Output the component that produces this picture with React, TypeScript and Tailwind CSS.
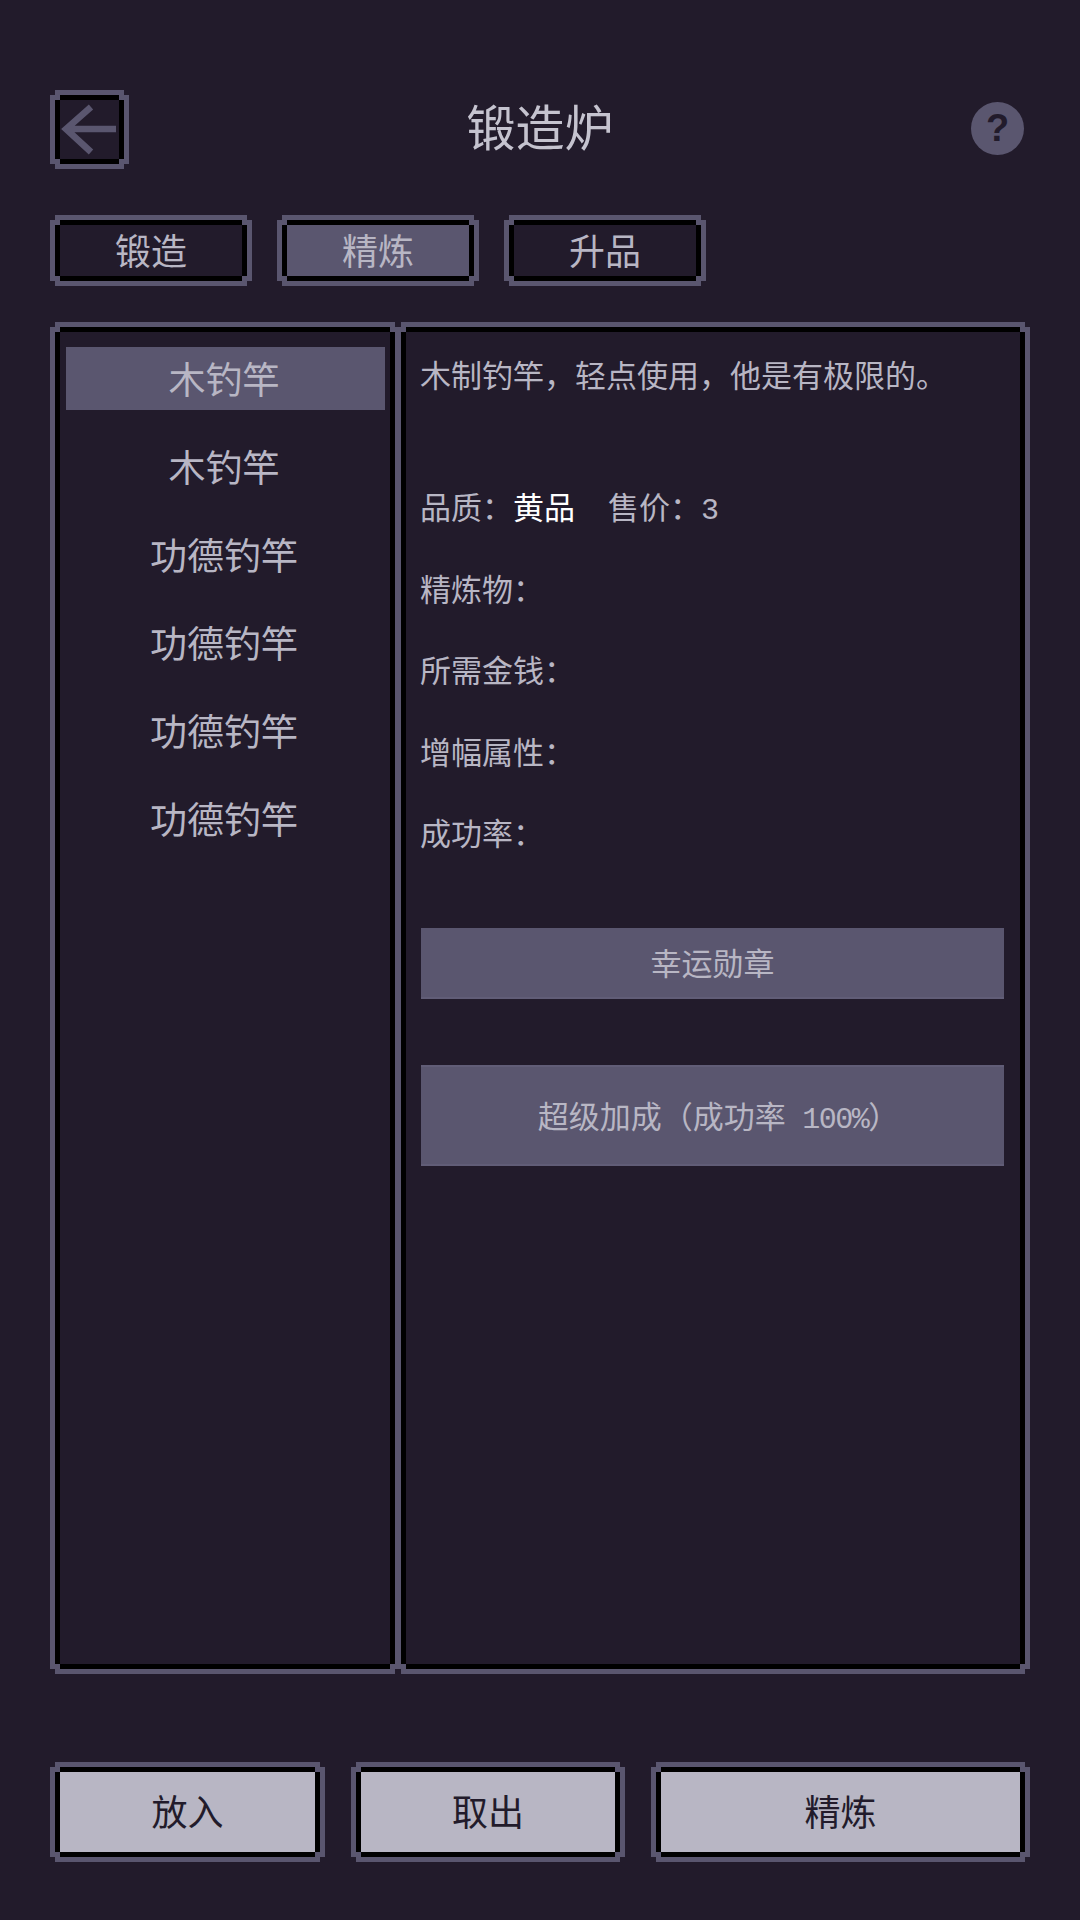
import { ReactNode } from "react";

const corners = [
  ["-top-[5px] -left-[5px] bg-[#221b2b]", "top-0 left-0 bg-[#5a566f]"],
  ["-top-[5px] -right-[5px] bg-[#221b2b]", "top-0 right-0 bg-[#5a566f]"],
  ["-bottom-[5px] -left-[5px] bg-[#221b2b]", "bottom-0 left-0 bg-[#5a566f]"],
  ["-bottom-[5px] -right-[5px] bg-[#221b2b]", "bottom-0 right-0 bg-[#5a566f]"],
];

const PixelFrame = ({
  className,
  fill,
  children,
}: {
  className: string;
  fill: string;
  children?: ReactNode;
}) => (
  <div className={`relative border-[5px] border-[#5a566f] ${className}`}>
    <div className={`h-full border-[5px] border-black ${fill}`}>{children}</div>
    {corners.flat().map((c) => (
      <span key={c} className={`absolute size-[5px] ${c}`} />
    ))}
  </div>
);

const Tab = ({ label, active }: { label: string; active?: boolean }) => (
  <PixelFrame
    className="w-[202px] h-[71px]"
    fill={active ? "bg-[#5a566f]" : "bg-[#221b2b]"}
  >
    <div className="flex h-full items-center justify-center pt-[10px] text-[36px] text-[#b8b6c4]">
      {label}
    </div>
  </PixelFrame>
);

const ActionButton = ({ label, className }: { label: string; className: string }) => (
  <PixelFrame className={`h-[100px] ${className}`} fill="bg-[#b8b6c4]">
    <div className="flex h-full items-center justify-center pt-[10px] text-[36px] text-[#221b2b]">
      {label}
    </div>
  </PixelFrame>
);

const items = ["木钓竿", "木钓竿", "功德钓竿", "功德钓竿", "功德钓竿", "功德钓竿"];
const fields = ["精炼物：", "所需金钱：", "增幅属性：", "成功率："];

const App = () => {
  return (
    <div className="h-[1920px] w-[1080px] overflow-hidden bg-[#221b2b] px-[50px] pt-[90px] font-['Liberation_Mono','Noto_Sans_CJK_SC',monospace] text-[#b8b6c4]">
      <div className="flex h-[79px] items-center justify-between">
        <PixelFrame className="size-[79px]" fill="bg-[#221b2b]">
          <svg viewBox="0 0 59 59" className="size-full">
            <path
              d="M56 29H6M31 7 6 29l25 23"
              fill="none"
              stroke="#5a566f"
              strokeWidth="6.5"
            />
          </svg>
        </PixelFrame>
        <h1 className="pt-[8px] text-[49px] font-normal text-[#c5c3cf]">锻造炉</h1>
        <div className="flex w-[79px] justify-end pb-[2px] pr-[6px]">
          <div className="flex size-[53px] items-center justify-center rounded-full bg-[#5a566f] font-['Liberation_Sans',sans-serif] text-[38px] font-bold text-[#221b2b]">
            ?
          </div>
        </div>
      </div>

      <div className="mt-[46px] flex gap-[25px]">
        <Tab label="锻造" />
        <Tab label="精炼" active />
        <Tab label="升品" />
      </div>

      <div className="mt-[36px] flex h-[1352px]">
        <PixelFrame className="w-[350px]" fill="bg-[#221b2b] pl-[6px] pr-[5px] pt-[15px]">
          <div className="flex flex-col gap-[25px]">
            {items.map((name, i) => (
              <div
                key={i}
                className={`flex h-[63px] items-center justify-center pr-[3px] pt-[12px] text-[37px] ${
                  i === 0 ? "bg-[#5a566f]" : ""
                }`}
              >
                {name}
              </div>
            ))}
          </div>
        </PixelFrame>
        <PixelFrame className="-ml-[4px] flex-1" fill="bg-[#221b2b] pl-[14px] pr-[16px] pt-[25px]">
          <p className="h-[44px] text-[31px] leading-[44px] whitespace-nowrap">
            木制钓竿，轻点使用，他是有极限的。
          </p>
          <div className="mt-[88px] flex flex-col gap-[37.5px] text-[31px] leading-[44px]">
            <div className="flex h-[44px]">
              <span>品质：</span>
              <span className="text-white">黄品</span>
              <span className="ml-[33px]">
                售价：<span className="text-[30px] tracking-[-1.5px]">3</span>
              </span>
            </div>
            {fields.map((f) => (
              <div key={f} className="h-[44px]">
                {f}
              </div>
            ))}
          </div>
          <div className="ml-[1px] mt-[69px] flex h-[71px] w-[583px] items-center justify-center border-b-2 border-[#615d77] bg-[#5a566f] pt-[10px] text-[31px] text-[#b8b6c4]">
            幸运勋章
          </div>
          <div className="ml-[1px] mt-[66px] flex h-[101px] w-[583px] items-center justify-center border-y-2 border-[#615d77] bg-[#5a566f] pl-[12px] pt-[10px] text-[31px] text-[#b8b6c4]">
            超级加成（成功率<span className="whitespace-pre text-[30px] tracking-[-1.5px]"> 100%</span>）
          </div>
        </PixelFrame>
      </div>

      <div className="mt-[88px] flex gap-[26px]">
        <ActionButton label="放入" className="w-[275px]" />
        <ActionButton label="取出" className="w-[274px]" />
        <ActionButton label="精炼" className="flex-1" />
      </div>
    </div>
  );
};

export default App;
